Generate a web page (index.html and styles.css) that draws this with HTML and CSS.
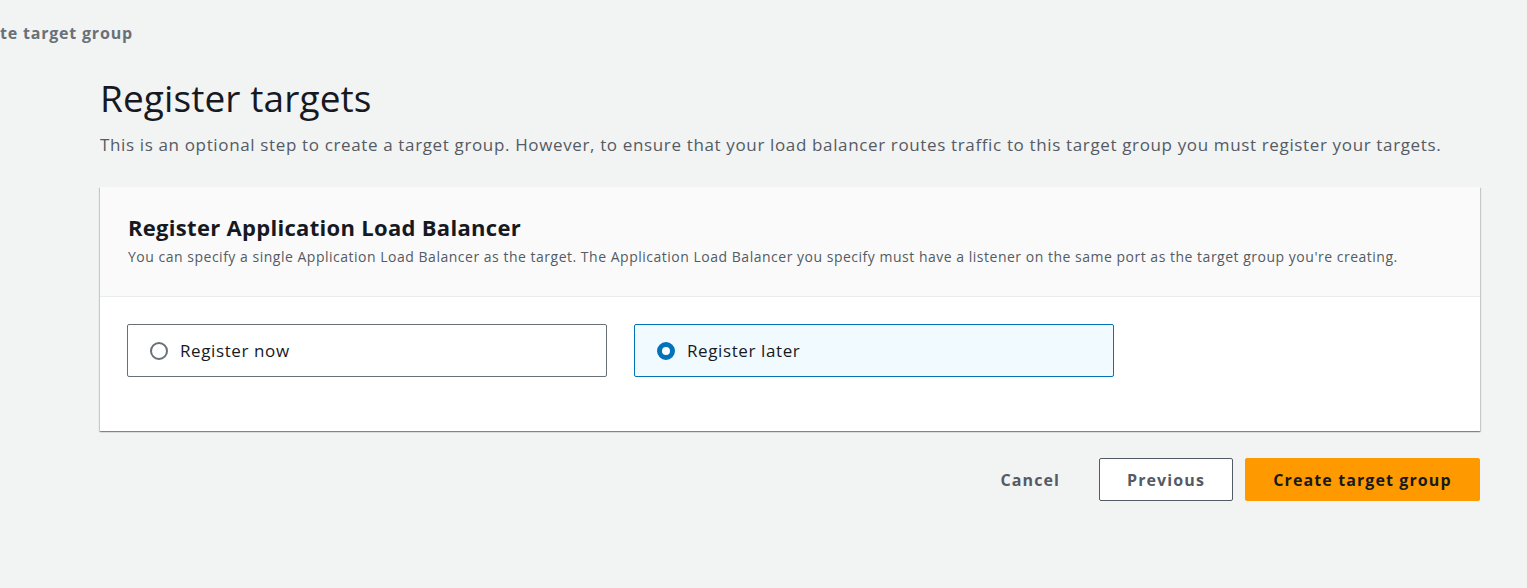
FILE: index.html
```html
<!DOCTYPE html>
<html lang="en">
<head>
<meta charset="utf-8">
<title>Register targets</title>
<link rel="stylesheet" href="styles.css">
</head>
<body>
<div class="breadcrumb">te target group</div>
<main class="content">
  <h1 class="title">Register targets</h1>
  <p class="lead">This is an optional step to create a target group. However, to ensure that your load balancer routes traffic to this target group you must register your targets.</p>
  <section class="card">
    <header class="card-head">
      <h2 class="card-title">Register Application Load Balancer</h2>
      <p class="card-desc">You can specify a single Application Load Balancer as the target. The Application Load Balancer you specify must have a listener on the same port as the target group you're creating.</p>
    </header>
    <div class="card-body">
      <div class="tiles">
        <label class="tile">
          <span class="radio"></span>
          <span class="tile-label">Register now</span>
        </label>
        <label class="tile tile-selected">
          <span class="radio radio-on"></span>
          <span class="tile-label">Register later</span>
        </label>
      </div>
    </div>
  </section>
  <div class="actions">
    <button class="btn btn-link">Cancel</button>
    <button class="btn btn-normal">Previous</button>
    <button class="btn btn-primary">Create target group</button>
  </div>
</main>
</body>
</html>
```

FILE: styles.css
```css
html, body {
  margin: 0;
  padding: 0;
}
body {
  background: #f2f3f3;
  font-family: "Open Sans", "Noto Sans", sans-serif;
  color: #16191f;
  width: 1527px;
  height: 588px;
  overflow: hidden;
}
.breadcrumb {
  padding-top: 22px;
  height: 22px;
  font-size: 16px;
  font-weight: 700;
  color: #687078;
  line-height: 22px;
  letter-spacing: 0.8px;
}
.content {
  padding: 32px 47px 0 100px;
}
.title {
  margin: 0;
  font-size: 37px;
  font-weight: 400;
  line-height: 44px;
  color: #16191f;
  letter-spacing: 0.1px;
}
.lead {
  margin: 14px 0 0;
  font-size: 17px;
  line-height: 22px;
  color: #545b64;
  letter-spacing: 0.64px;
  white-space: nowrap;
}
.card {
  margin-top: 31px;
  background: #fff;
  box-shadow: 0 1px 1px 0 rgba(0, 28, 36, 0.3), 1px 1px 1px 0 rgba(0, 28, 36, 0.15), -1px 1px 1px 0 rgba(0, 28, 36, 0.15);
}
.card-head {
  background: #fafafa;
  border-bottom: 1px solid #eaeded;
  padding: 24px 28px 0;
  height: 85px;
}
.card-title {
  margin: 0;
  font-size: 22px;
  font-weight: 700;
  line-height: 32px;
  color: #16191f;
  letter-spacing: 0.3px;
}
.card-desc {
  margin: 4px 0 0;
  font-size: 14px;
  line-height: 20px;
  color: #545b64;
  letter-spacing: 0.51px;
  white-space: nowrap;
}
.card-body {
  padding: 27px 27px 54px;
}
.tiles {
  display: flex;
  gap: 27px;
}
.tile {
  box-sizing: border-box;
  width: 480px;
  height: 53px;
  border: 1px solid #687078;
  border-radius: 2px;
  display: flex;
  align-items: center;
  padding-left: 22px;
  background: #fff;
}
.tile-selected {
  border-color: #0073bb;
  background: #f1faff;
}
.radio {
  box-sizing: border-box;
  width: 18px;
  height: 18px;
  border: 2px solid #687078;
  border-radius: 50%;
  background: #fff;
}
.radio-on {
  border: 5px solid #0073bb;
}
.tile-label {
  margin-left: 12px;
  font-size: 17px;
  color: #16191f;
  letter-spacing: 0.6px;
}
.actions {
  margin-top: 27px;
  display: flex;
  justify-content: flex-end;
  align-items: center;
  gap: 12px;
}
.btn {
  font-family: inherit;
  font-size: 16px;
  font-weight: 700;
  height: 43px;
  border-radius: 2px;
  cursor: pointer;
  letter-spacing: 1.1px;
}
.btn-link {
  background: transparent;
  border: none;
  color: #545b64;
  padding: 0 27px;
}
.btn-normal {
  width: 134px;
  background: #fff;
  border: 1px solid #545b64;
  color: #545b64;
}
.btn-primary {
  width: 235px;
  background: #ff9900;
  border: 1px solid #ff9900;
  color: #16191f;
}
```
